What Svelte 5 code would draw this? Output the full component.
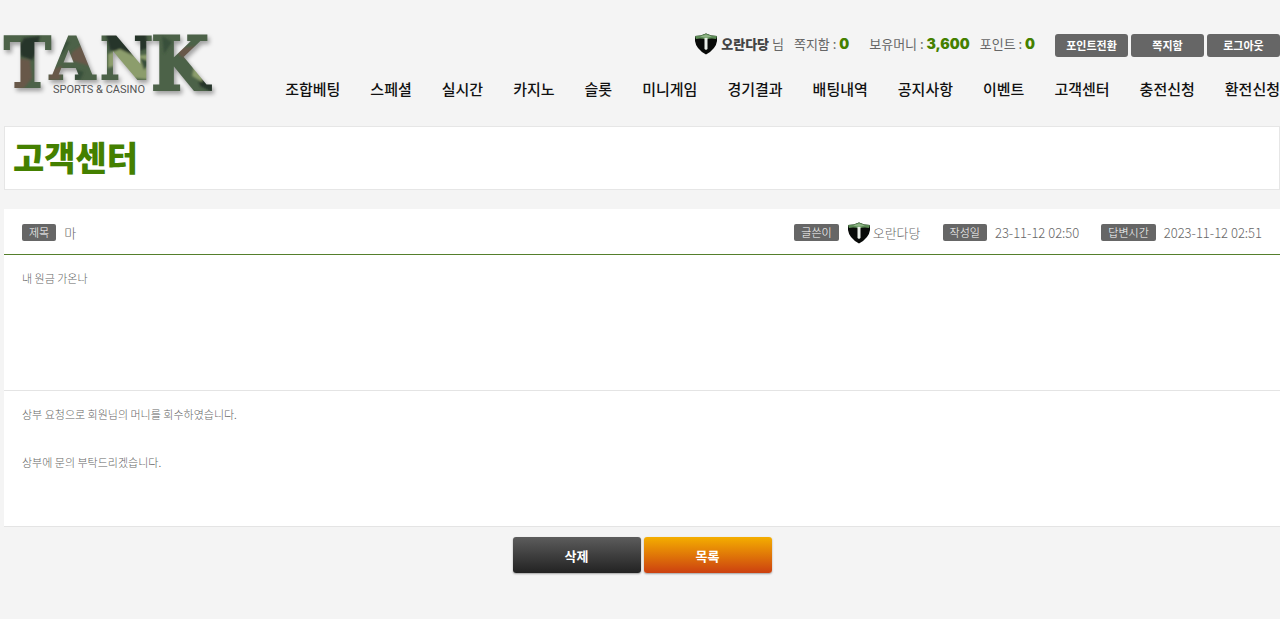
<script>
	const menu = [
		'조합베팅',
		'스페셜',
		'실시간',
		'카지노',
		'슬롯',
		'미니게임',
		'경기결과',
		'배팅내역',
		'공지사항',
		'이벤트',
		'고객센터',
		'충전신청',
		'환전신청'
	];

	const actions = ['포인트전환', '쪽지함', '로그아웃'];

	const post = {
		title: '마',
		writer: '오란다당',
		created: '23-11-12 02:50',
		answered: '2023-11-12 02:51',
		body: '내 원금 가온나',
		reply: ['상부 요청으로 회원님의 머니를 회수하였습니다.', '상부에 문의 부탁드리겠습니다.']
	};
</script>

{#snippet shield()}
	<svg class="shield" viewBox="0 0 24 22" aria-hidden="true">
		<path d="M1 3 Q7 3 12 0.5 Q17 3 23 3 V8 Q22 16 12 21.5 Q2 16 1 8 Z" fill="#080a08" />
		<path d="M1 3 Q7 3 12 0.5 Q17 3 23 3 L22 6 Q17 5 12 6.5 Q7 5 2 6 Z" fill="#5c8a55" />
		<path d="M6 3.5 L12 1.5 L18 3.5 L12 5 Z" fill="#8fb486" />
		<path d="M10.5 5 H13.5 V16 L12 17 L10.5 16 Z" fill="#e9eee8" />
	</svg>
{/snippet}

<div class="page">
	<header class="header">
		<a class="logo" href="#home" aria-label="TANK Sports &amp; Casino">
			<svg viewBox="0 0 214 70" aria-hidden="true">
				<defs>
					<filter id="soften">
						<feGaussianBlur stdDeviation="1" />
					</filter>
					<pattern id="camo" width="230" height="80" patternUnits="userSpaceOnUse">
						<rect width="230" height="80" fill="#4c6248" />
						<g filter="url(#soften)">
							<path d="M20 4 L36 2 L32 20 L28 26 L17 22 L15 12 Z M102 0 L142 0 L144 14 L126 20 L106 16 Z M192 36 L205 32 L212 60 L196 52 Z" fill="#26352a" />
							<path d="M12 24 L26 26 L28 44 L20 54 L6 58 Z M80 10 L94 8 L94 24 L86 32 L66 26 L68 18 Z M46 36 L58 32 L56 46 H44 Z M172 14 L198 12 L202 24 L186 26 L176 22 Z" fill="#685848" />
							<path d="M104 20 L116 15 L130 22 L148 20 L152 46 L128 44 L116 30 L104 34 Z M86 28 L94 24 V40 L88 38 Z M190 32 L200 34 L198 48 L188 42 Z" fill="#8c9d6c" />
							<path d="M48 4 L66 8 L58 20 L48 18 Z M136 24 L148 28 L140 36 Z M158 2 L168 8 L160 20 Z M68 34 L80 38 L76 46 H66 Z" fill="#39503a" />
						</g>
					</pattern>
				</defs>
				<g class="wordmark">
					<text class="narrow" x="0" y="53" font-size="70">T</text>
					<text x="46" y="45" font-size="58">A</text>
					<text x="96" y="45" font-size="58">N</text>
					<text class="narrow" x="147" y="56" font-size="74">K</text>
				</g>
				<text class="tagline" x="49" y="59">SPORTS &amp; CASINO</text>
			</svg>
		</a>

		<div class="header-main">
			<div class="member">
				<div class="member-name">
					{@render shield()}
					<span><strong>오란다당</strong> 님</span>
				</div>
				<span>쪽지함 : <b>0</b></span>
				<span class="money">보유머니 : <b>3,600</b></span>
				<span>포인트 : <b>0</b></span>
				<div class="actions">
					{#each actions as action}
						<button type="button">{action}</button>
					{/each}
				</div>
			</div>
			<nav class="menu">
				{#each menu as item}
					<a href="#menu">{item}</a>
				{/each}
			</nav>
		</div>
	</header>

	<main>
		<h1>고객센터</h1>

		<article class="post">
			<div class="post-head">
				<div class="field subject"><span class="badge">제목</span><span>{post.title}</span></div>
				<div class="field">
					<span class="badge">글쓴이</span>
					<span class="writer-name">{@render shield()}{post.writer}</span>
				</div>
				<div class="field"><span class="badge">작성일</span><time>{post.created}</time></div>
				<div class="field"><span class="badge">답변시간</span><time>{post.answered}</time></div>
			</div>
			<div class="post-body">
				<p>{post.body}</p>
			</div>
			<div class="post-body">
				{#each post.reply as line}
					<p>{line}</p>
				{/each}
			</div>
		</article>

		<div class="buttons">
			<button type="button" class="delete">삭제</button>
			<button type="button" class="list">목록</button>
		</div>
	</main>
</div>

<style>
	:global(body) {
		background: #f4f4f4;
	}

	.page {
		padding: 34px 0 46px 4px;
		font-family: 'Noto Sans CJK KR', sans-serif;
		font-size: 13px;
		color: #666;
	}

	.header {
		display: flex;
		justify-content: space-between;
		height: 92px;
	}

	.logo {
		flex: none;
		width: 214px;
	}

	.logo svg {
		display: block;
		width: 214px;
		height: 70px;
		overflow: visible;
	}

	.wordmark {
		font-family: 'DejaVu Serif', serif;
		font-weight: 700;
		fill: url(#camo);
		stroke: url(#camo);
		stroke-width: 2px;
		filter: drop-shadow(2px 3px 2px rgba(0, 0, 0, 0.35));
	}

	.narrow {
		font-family: 'DejaVu Serif Condensed', 'DejaVu Serif', serif;
	}

	.tagline {
		font-family: Roboto, sans-serif;
		font-size: 11px;
		fill: #555;
	}

	.header-main {
		display: flex;
		flex-direction: column;
		align-items: flex-end;
		gap: 20px;
	}

	.member {
		display: flex;
		align-items: flex-start;
		gap: 10px;
		height: 23px;
		line-height: 20px;
		white-space: nowrap;
	}

	.member-name {
		display: flex;
		align-items: center;
		gap: 3px;
		height: 20px;
	}

	.member-name strong {
		font-weight: 900;
		color: #444;
	}

	.member b {
		font-family: Inter, sans-serif;
		font-size: 14px;
		font-weight: 900;
		color: #448000;
	}

	.money {
		margin-left: 10px;
	}

	.actions {
		display: flex;
		gap: 3px;
		margin-left: 10px;
	}

	.actions button {
		width: 73px;
		height: 23px;
		padding: 0 0 2px;
		border: 0;
		border-radius: 3px;
		background: #666;
		font-family: inherit;
		font-size: 11px;
		font-weight: 700;
		color: #fff;
		cursor: pointer;
	}

	.shield {
		flex: none;
		width: 24px;
		height: 22px;
	}

	.menu {
		display: flex;
		gap: 30px;
		white-space: nowrap;
	}

	.menu a {
		font-size: 15px;
		font-weight: 500;
		line-height: 24px;
		color: #111;
		text-decoration: none;
	}

	h1 {
		margin: 0 0 19px;
		padding: 5px 8px 7px;
		border: 1px solid #e6e6e6;
		background: #fff;
		font-size: 34px;
		font-weight: 900;
		line-height: 50px;
		color: #448000;
	}

	.post {
		background: #fff;
	}

	.post-head {
		display: flex;
		align-items: center;
		gap: 22px;
		height: 43px;
		padding: 2px 18px 0;
		border-bottom: 1px solid #557f2c;
		font-weight: 300;
		line-height: 20px;
		white-space: nowrap;
	}

	.field {
		display: flex;
		align-items: center;
		gap: 8px;
	}

	.subject {
		flex: 1;
	}

	.badge {
		padding: 0 7px;
		border-radius: 2px;
		background: #666;
		font-size: 11px;
		line-height: 17px;
		color: #fff;
	}

	.writer-name {
		display: flex;
		align-items: center;
		gap: 2px;
	}

	.post-body {
		box-sizing: border-box;
		min-height: 136px;
		padding: 11px 18px;
		border-bottom: 1px solid #e4e4e4;
		font-size: 11px;
		font-weight: 300;
		line-height: 24px;
	}

	.post-body p {
		margin: 0 0 24px;
	}

	.buttons {
		display: flex;
		justify-content: center;
		gap: 3px;
		margin-top: 10px;
	}

	.buttons button {
		width: 128px;
		height: 36px;
		padding: 0;
		border: 0;
		border-radius: 3px;
		box-shadow: 0 1px 2px rgba(0, 0, 0, 0.35);
		font-family: inherit;
		font-size: 13px;
		font-weight: 700;
		color: #fff;
		cursor: pointer;
	}

	.delete {
		background: linear-gradient(#5c5c5c, #222);
	}

	.list {
		background: linear-gradient(#f4ae00, #cc4010);
	}
</style>
